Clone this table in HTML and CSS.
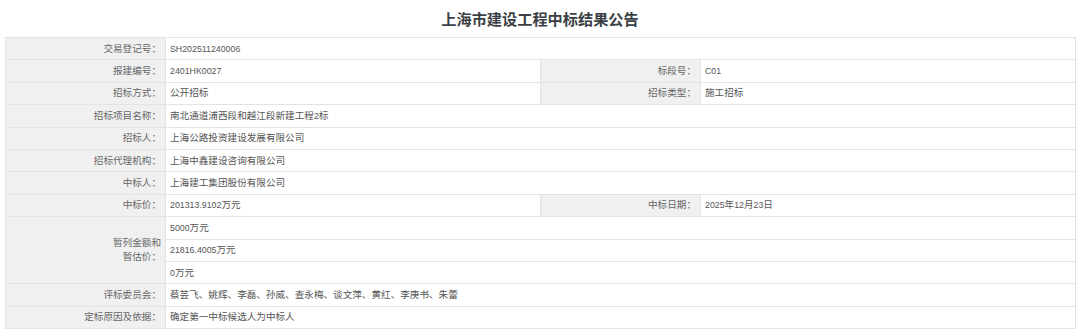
FILE: index.html
```html
<!DOCTYPE html>
<html lang="zh-CN">
<head>
<meta charset="utf-8">
<title>上海市建设工程中标结果公告</title>
<link rel="stylesheet" href="styles.css">
</head>
<body>
<div class="page">
  <h1 class="title">上海市建设工程中标结果公告</h1>
  <table class="info">
    <colgroup>
      <col class="c-label"><col class="c-value"><col class="c-label"><col class="c-value">
    </colgroup>
    <tbody>
      <tr><td class="label">交易登记号：</td><td class="value" colspan="3"><span class="lat">SH202511240006</span></td></tr>
      <tr><td class="label">报建编号：</td><td class="value"><span class="lat">2401HK0027</span></td><td class="label">标段号：</td><td class="value"><span class="lat">C01</span></td></tr>
      <tr><td class="label">招标方式：</td><td class="value">公开招标</td><td class="label">招标类型：</td><td class="value">施工招标</td></tr>
      <tr><td class="label">招标项目名称：</td><td class="value" colspan="3">南北通道浦西段和越江段新建工程<span class="lat">2</span>标</td></tr>
      <tr><td class="label">招标人：</td><td class="value" colspan="3">上海公路投资建设发展有限公司</td></tr>
      <tr><td class="label">招标代理机构：</td><td class="value" colspan="3">上海中鑫建设咨询有限公司</td></tr>
      <tr><td class="label">中标人：</td><td class="value" colspan="3">上海建工集团股份有限公司</td></tr>
      <tr><td class="label">中标价：</td><td class="value"><span class="lat">201313.9102</span>万元</td><td class="label">中标日期：</td><td class="value"><span class="lat">2025</span>年<span class="lat">12</span>月<span class="lat">23</span>日</td></tr>
      <tr><td class="label multi" rowspan="3">暂列金额和<br>暂估价：</td><td class="value" colspan="3"><span class="lat">5000</span>万元</td></tr>
      <tr><td class="value" colspan="3"><span class="lat">21816.4005</span>万元</td></tr>
      <tr><td class="value" colspan="3"><span class="lat">0</span>万元</td></tr>
      <tr><td class="label">评标委员会：</td><td class="value" colspan="3">蔡芸飞、姚辉、李磊、孙威、查永梅、谈文萍、黄红、李庚书、朱蕾</td></tr>
      <tr><td class="label">定标原因及依据：</td><td class="value" colspan="3">确定第一中标候选人为中标人</td></tr>
    </tbody>
  </table>
</div>
</body>
</html>
```

FILE: styles.css
```css
html, body {
  margin: 0;
  padding: 0;
  background: #ffffff;
}

body {
  font-family: "Liberation Sans", "Noto Sans CJK SC", sans-serif;
  color: #555555;
}

.page {
  padding: 0 5px;
}

.title {
  margin: 0;
  height: 37px;
  line-height: 37px;
  text-align: center;
  font-size: 15.2px;
  font-weight: bold;
  color: #3a3f45;
  font-family: "Noto Sans CJK SC", sans-serif;
}

.info {
  width: 1070px;
  table-layout: fixed;
  border-collapse: collapse;
  font-size: 9.6px;
}

.c-label { width: 160px; }
.c-value { width: 375px; }

.info td {
  border: 1px solid #e3e3e3;
  height: 22.4px;
  line-height: 14px;
  vertical-align: middle;
  box-sizing: border-box;
}

.label {
  padding: 0 4px 0 5px;
  background: #f0f0f0;
  color: #666666;
  text-align: right;
}

.value {
  padding: 0 5px 0 4px;
  background: #ffffff;
  color: #555555;
  text-align: left;
}

.lat {
  font-size: 8.8px;
}
```
